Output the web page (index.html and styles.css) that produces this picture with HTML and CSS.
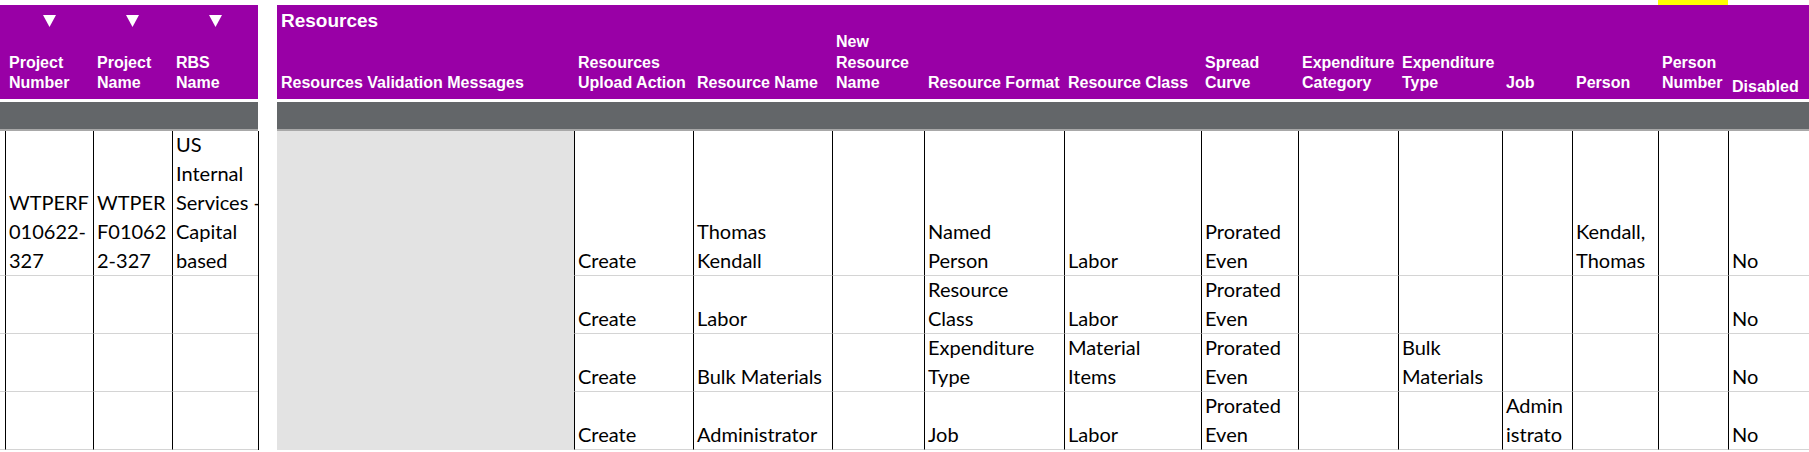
FILE: index.html
```html
<!DOCTYPE html>
<html>
<head>
<meta charset="utf-8">
<link rel="stylesheet" href="styles.css">
</head>
<body>
<div class="topband"><div class="marker"></div></div>
<div class="sheet">
  <!-- header row -->
  <div class="h"></div>
  <div class="h tri"><svg class="arrow" width="13" height="12" viewBox="0 0 13 12"><polygon points="0,0 13,0 6.5,12" fill="#fff"/></svg><span>Project<br>Number</span></div>
  <div class="h tri"><svg class="arrow" width="13" height="12" viewBox="0 0 13 12"><polygon points="0,0 13,0 6.5,12" fill="#fff"/></svg><span>Project<br>Name</span></div>
  <div class="h tri"><svg class="arrow" width="13" height="12" viewBox="0 0 13 12"><polygon points="0,0 13,0 6.5,12" fill="#fff"/></svg><span>RBS<br>Name</span></div>
  <div class="h gap"></div>
  <div class="h titled"><span class="title">Resources</span><span>Resources Validation Messages</span></div>
  <div class="h"><span>Resources<br>Upload Action</span></div>
  <div class="h"><span>Resource Name</span></div>
  <div class="h"><span>New<br>Resource<br>Name</span></div>
  <div class="h"><span>Resource Format</span></div>
  <div class="h"><span>Resource Class</span></div>
  <div class="h"><span>Spread<br>Curve</span></div>
  <div class="h"><span>Expenditure<br>Category</span></div>
  <div class="h"><span>Expenditure<br>Type</span></div>
  <div class="h"><span>Job</span></div>
  <div class="h"><span>Person</span></div>
  <div class="h"><span>Person<br>Number</span></div>
  <div class="h low"><span>Disabled</span></div>

  <!-- gray band -->
  <div class="band"></div><div class="band"></div><div class="band"></div><div class="band"></div>
  <div class="band gap"></div>
  <div class="band"></div><div class="band"></div><div class="band"></div><div class="band"></div><div class="band"></div><div class="band"></div><div class="band"></div><div class="band"></div><div class="band"></div><div class="band"></div><div class="band"></div><div class="band"></div><div class="band"></div>

  <!-- row 1 -->
  <div class="c edge"></div>
  <div class="c"><span>WTPERF<br>010622-<br>327</span></div>
  <div class="c"><span>WTPER<br>F01062<br>2-327</span></div>
  <div class="c"><span>US<br>Internal<br>Services -<br>Capital<br>based</span></div>
  <div class="c gap"></div>
  <div class="c val"></div>
  <div class="c"><span>Create</span></div>
  <div class="c"><span>Thomas<br>Kendall</span></div>
  <div class="c"></div>
  <div class="c"><span>Named<br>Person</span></div>
  <div class="c"><span>Labor</span></div>
  <div class="c"><span>Prorated<br>Even</span></div>
  <div class="c"></div>
  <div class="c"></div>
  <div class="c"></div>
  <div class="c"><span>Kendall,<br>Thomas</span></div>
  <div class="c"></div>
  <div class="c"><span>No</span></div>

  <!-- row 2 -->
  <div class="c edge"></div>
  <div class="c"></div>
  <div class="c"></div>
  <div class="c"></div>
  <div class="c gap"></div>
  <div class="c val"></div>
  <div class="c"><span>Create</span></div>
  <div class="c"><span>Labor</span></div>
  <div class="c"></div>
  <div class="c"><span>Resource<br>Class</span></div>
  <div class="c"><span>Labor</span></div>
  <div class="c"><span>Prorated<br>Even</span></div>
  <div class="c"></div>
  <div class="c"></div>
  <div class="c"></div>
  <div class="c"></div>
  <div class="c"></div>
  <div class="c"><span>No</span></div>

  <!-- row 3 -->
  <div class="c edge"></div>
  <div class="c"></div>
  <div class="c"></div>
  <div class="c"></div>
  <div class="c gap"></div>
  <div class="c val"></div>
  <div class="c"><span>Create</span></div>
  <div class="c"><span>Bulk Materials</span></div>
  <div class="c"></div>
  <div class="c"><span>Expenditure<br>Type</span></div>
  <div class="c"><span>Material<br>Items</span></div>
  <div class="c"><span>Prorated<br>Even</span></div>
  <div class="c"></div>
  <div class="c"><span>Bulk<br>Materials</span></div>
  <div class="c"></div>
  <div class="c"></div>
  <div class="c"></div>
  <div class="c"><span>No</span></div>

  <!-- row 4 -->
  <div class="c edge"></div>
  <div class="c"></div>
  <div class="c"></div>
  <div class="c"></div>
  <div class="c gap"></div>
  <div class="c val"></div>
  <div class="c"><span>Create</span></div>
  <div class="c"><span>Administrator</span></div>
  <div class="c"></div>
  <div class="c"><span>Job</span></div>
  <div class="c"><span>Labor</span></div>
  <div class="c"><span>Prorated<br>Even</span></div>
  <div class="c"></div>
  <div class="c"></div>
  <div class="c"><span>Admin<br>istrato</span></div>
  <div class="c"></div>
  <div class="c"></div>
  <div class="c"><span>No</span></div>
</div>
</body>
</html>
```

FILE: styles.css
```css
html, body {
  margin: 0;
  padding: 0;
  background: #fff;
}
body {
  width: 1809px;
  height: 452px;
  overflow: hidden;
}
.topband {
  height: 5px;
  display: flex;
}
.topband .marker {
  margin-left: 1658px;
  width: 70px;
  background: #ffff00;
}
.sheet {
  display: grid;
  grid-template-columns: 5px 88px 79px 86px 19px 297px 119px 139px 92px 140px 137px 97px 100px 104px 70px 86px 70px 81px;
  grid-template-rows: 97px 29px 145px 58px 58px 58px;
}
.h {
  box-sizing: border-box;
  background: #9900a6;
  border-bottom: 3px solid #fff;
  color: #fff;
  font-family: "Liberation Sans", Arial, sans-serif;
  font-weight: bold;
  font-size: 16px;
  line-height: 20.6px;
  padding: 0 0 5px 4px;
  display: flex;
  flex-direction: column;
  justify-content: flex-end;
  white-space: nowrap;
  min-width: 0;
}
.h.gap {
  background: #fff;
}
.h.tri {
  justify-content: space-between;
}
.h.tri .arrow {
  align-self: center;
  margin-left: -4px;
  margin-top: 10px;
  display: block;
}
.h.titled {
  justify-content: space-between;
}
.h .title {
  font-size: 19px;
  line-height: 22px;
  margin-top: 5px;
}
.h.low {
  padding-bottom: 1.5px;
}
.band {
  box-sizing: border-box;
  background: #636669;
  border-bottom: 2px solid #a8a8a8;
}
.band.gap {
  background: #fff;
  border-bottom-color: #fff;
}
.c {
  box-sizing: border-box;
  border-left: 1px solid #000;
  border-bottom: 1px solid #d4d4d4;
  font-family: Lato, "Liberation Sans", sans-serif;
  font-size: 20px;
  line-height: 29px;
  color: #000;
  padding-left: 3px;
  display: flex;
  align-items: flex-end;
  white-space: nowrap;
  overflow: hidden;
  min-width: 0;
}
.c.edge {
  border-left: none;
  padding: 0;
}
.c.gap {
  border-bottom: none;
}
.c.val {
  background: #e3e3e3;
  border: none;
}
```
